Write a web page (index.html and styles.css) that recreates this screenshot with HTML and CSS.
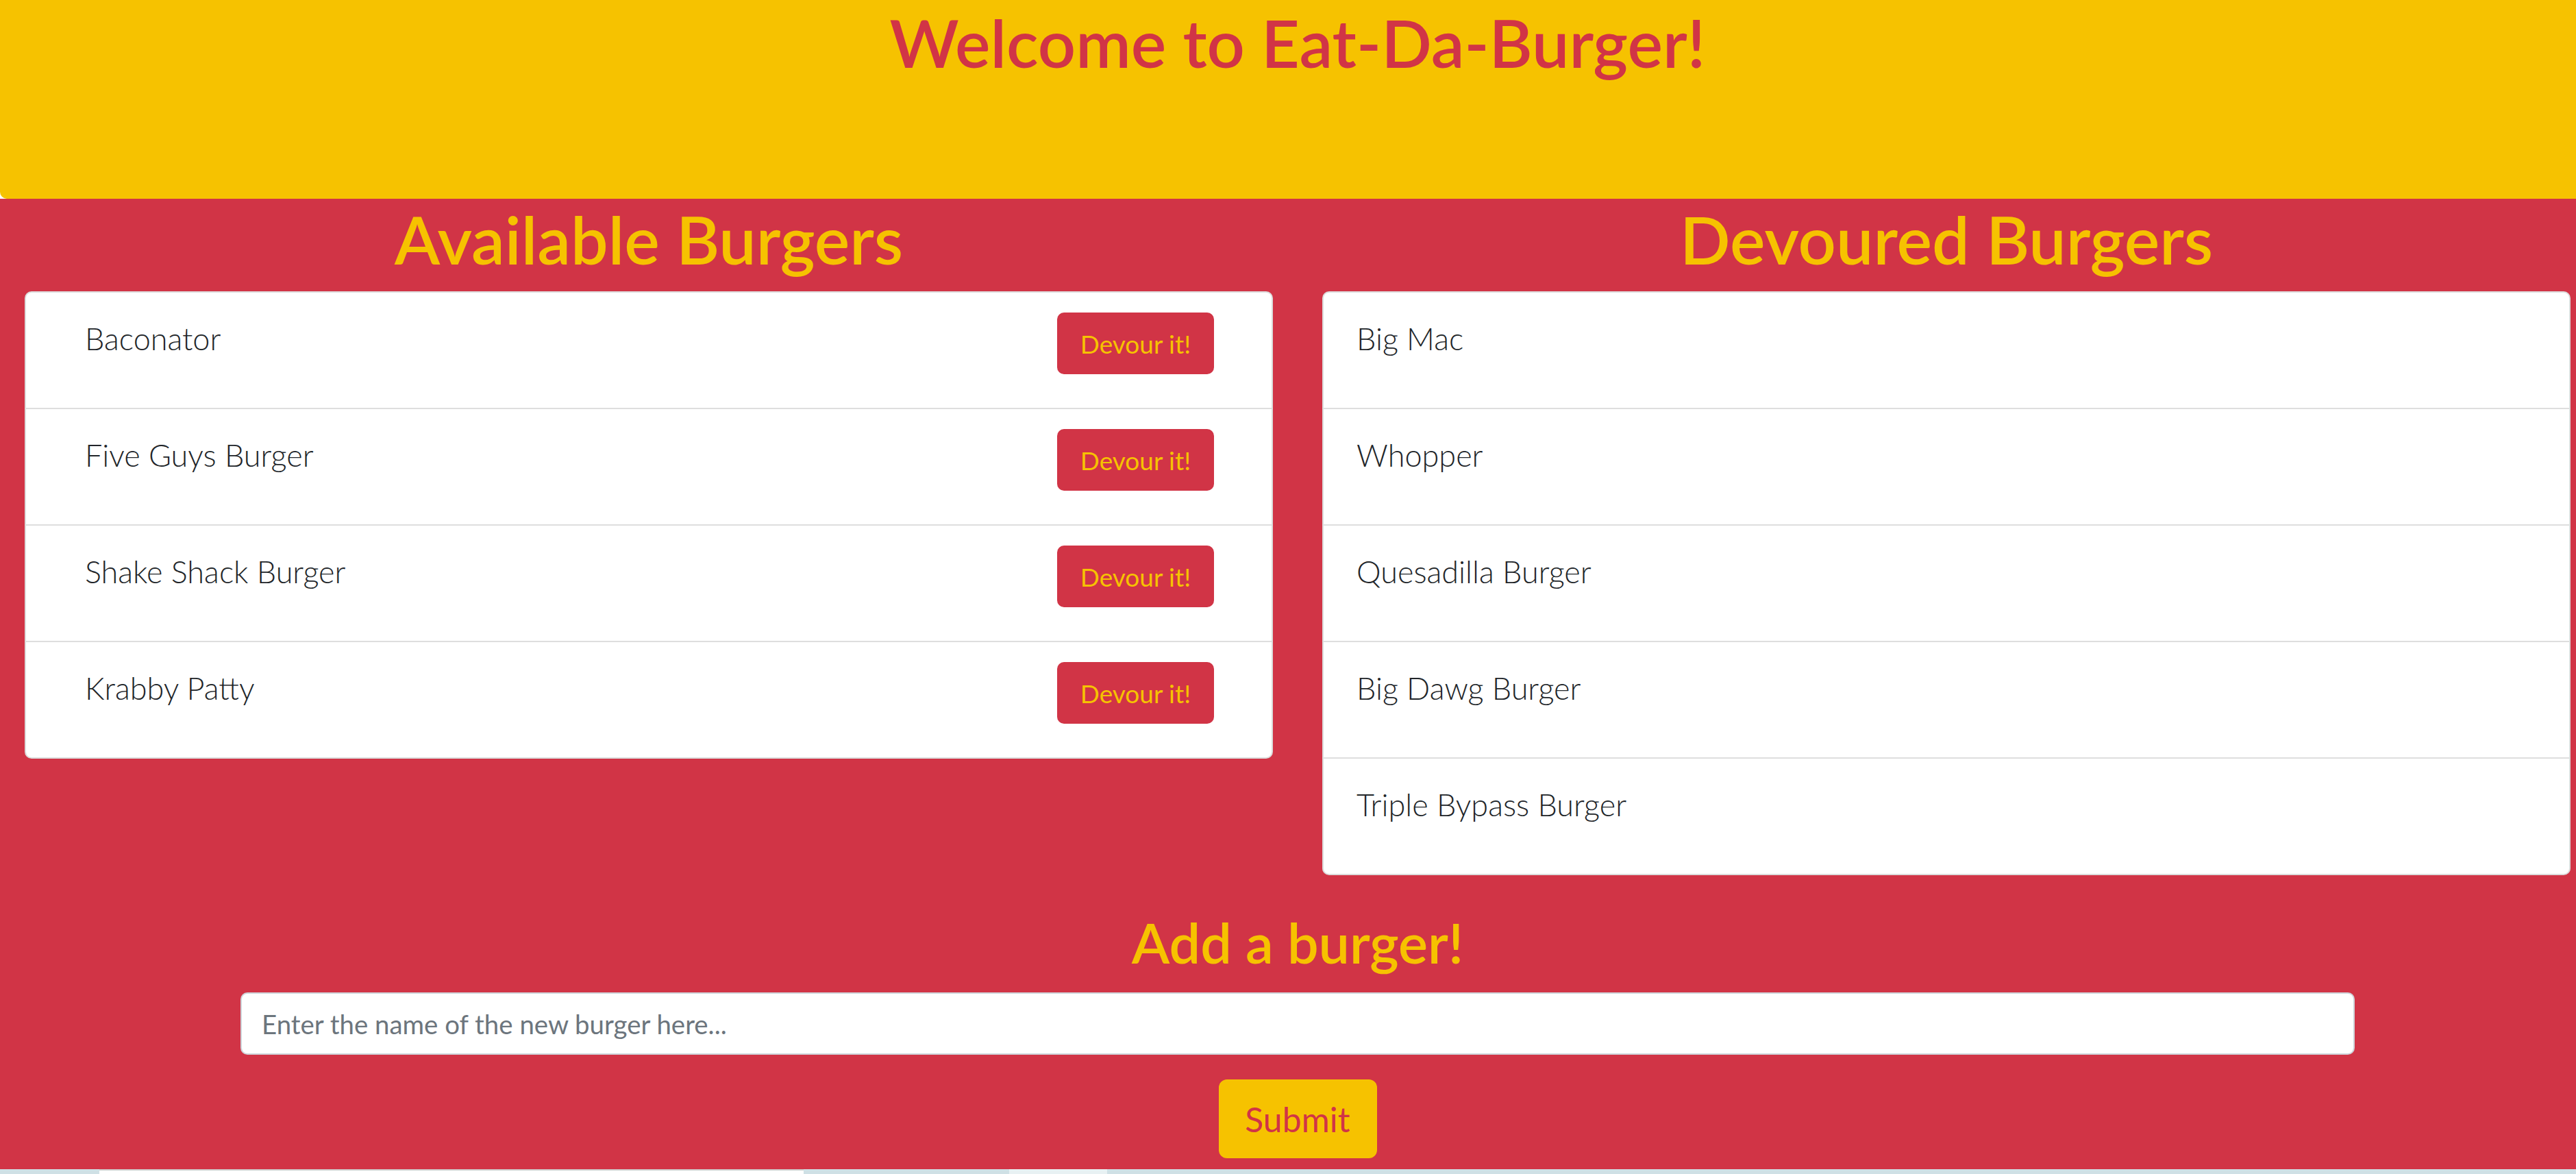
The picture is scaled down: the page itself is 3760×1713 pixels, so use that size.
FILE: index.html
```html
<!DOCTYPE html>
<html lang="en">
<head>
<meta charset="utf-8">
<title>Eat-Da-Burger!</title>
<link rel="stylesheet" href="styles.css">
</head>
<body>
<div class="page">
  <header class="jumbotron">
    <h1 class="title">Welcome to Eat-Da-Burger!</h1>
  </header>
  <main class="board">
    <div class="cols">
      <section class="col">
        <h2 class="col-title">Available Burgers</h2>
        <ul class="card">
          <li class="item item-left"><span class="name">Baconator</span><button class="devour" type="button">Devour it!</button></li>
          <li class="item item-left"><span class="name">Five Guys Burger</span><button class="devour" type="button">Devour it!</button></li>
          <li class="item item-left"><span class="name">Shake Shack Burger</span><button class="devour" type="button">Devour it!</button></li>
          <li class="item item-left"><span class="name">Krabby Patty</span><button class="devour" type="button">Devour it!</button></li>
        </ul>
      </section>
      <section class="col">
        <h2 class="col-title">Devoured Burgers</h2>
        <ul class="card">
          <li class="item item-right"><span class="name">Big Mac</span></li>
          <li class="item item-right"><span class="name">Whopper</span></li>
          <li class="item item-right"><span class="name">Quesadilla Burger</span></li>
          <li class="item item-right"><span class="name">Big Dawg Burger</span></li>
          <li class="item item-right"><span class="name">Triple Bypass Burger</span></li>
        </ul>
      </section>
    </div>
    <form class="add-form">
      <h2 class="add-title">Add a burger!</h2>
      <input class="add-input" type="text" placeholder="Enter the name of the new burger here...">
      <button class="submit" type="button">Submit</button>
    </form>
  </main>
</div>
<div class="hscroll"><div class="hscroll-thumb"></div><div class="hscroll-light"></div></div>
</body>
</html>
```
FILE: styles.css
```css
html, body {
  margin: 0;
  padding: 0;
  overflow: hidden;
  background: #ffffff;
}

.page {
  width: 3788px;
  font-family: "Lato", "Open Sans", sans-serif;
  color: #212529;
}

.jumbotron {
  height: 290px;
  box-sizing: border-box;
  background: #f6c200;
  border-radius: 0 0 10px 10px;
  padding-top: 4px;
  text-align: center;
}

.title {
  margin: 0;
  font-size: 97px;
  font-weight: 600;
  line-height: 116px;
  color: #d13446;
}

.board {
  background: #d13446;
  height: 1423px;
  box-sizing: border-box;
  padding-top: 1px;
}

.cols {
  display: grid;
  grid-template-columns: 1894px 1894px;
  align-items: start;
}

.col {
  padding: 0 36px;
}

.col-title {
  margin: 0 0 18px;
  text-align: center;
  font-size: 97px;
  font-weight: 600;
  line-height: 116px;
  color: #f6c200;
}

.card {
  list-style: none;
  margin: 0;
  padding: 0;
  background: #ffffff;
  border: 2px solid #dcdcdc;
  border-radius: 10px;
}

.item {
  display: flex;
  justify-content: space-between;
  align-items: flex-start;
  height: 168px;
  box-sizing: content-box;
}

.item + .item {
  border-top: 2px solid #dedede;
}

.item-left {
  padding: 0 84px 0 86px;
}

.item-right {
  padding: 0 48px;
}

.name {
  margin-top: 34px;
  font-size: 45px;
  font-weight: 300;
  line-height: 67px;
  color: #212529;
}

.devour {
  margin-top: 29px;
  width: 229px;
  height: 90px;
  border: none;
  border-radius: 10px;
  background: #d13446;
  color: #f6c200;
  font-family: "Lato", "Open Sans", sans-serif;
  font-size: 37px;
  font-weight: 400;
  padding: 0;
}

.add-form {
  display: flex;
  flex-direction: column;
  align-items: center;
  margin-top: 49px;
}

.add-title {
  margin: 0 0 25px;
  font-size: 81px;
  font-weight: 600;
  line-height: 97px;
  color: #f6c200;
}

.add-input {
  width: 3086px;
  height: 91px;
  box-sizing: border-box;
  border: 2px solid #ced4da;
  border-radius: 10px;
  background: #ffffff;
  padding: 0 29px;
  font-family: "Lato", "Open Sans", sans-serif;
  font-size: 38.4px;
  color: #495057;
  outline: none;
}

.add-input::placeholder {
  color: #6c757d;
  opacity: 1;
}

.submit {
  margin-top: 36px;
  width: 231px;
  height: 115px;
  border: none;
  border-radius: 12px;
  background: #f6c200;
  color: #d13446;
  font-family: "Lato", "Open Sans", sans-serif;
  font-size: 50px;
  font-weight: 400;
  padding: 0;
}

.hscroll {
  position: fixed;
  left: 0;
  right: 0;
  bottom: 0;
  height: 7px;
  background: #cfe0e5;
}

.hscroll-thumb {
  position: absolute;
  left: 145px;
  width: 1028px;
  top: 0;
  bottom: 0;
  background: #ffffff;
  border-top: 2px solid #cfcfcf;
}

.hscroll-light {
  position: absolute;
  left: 1473px;
  width: 143px;
  top: 0;
  bottom: 0;
  background: #e8f1f3;
}
```
